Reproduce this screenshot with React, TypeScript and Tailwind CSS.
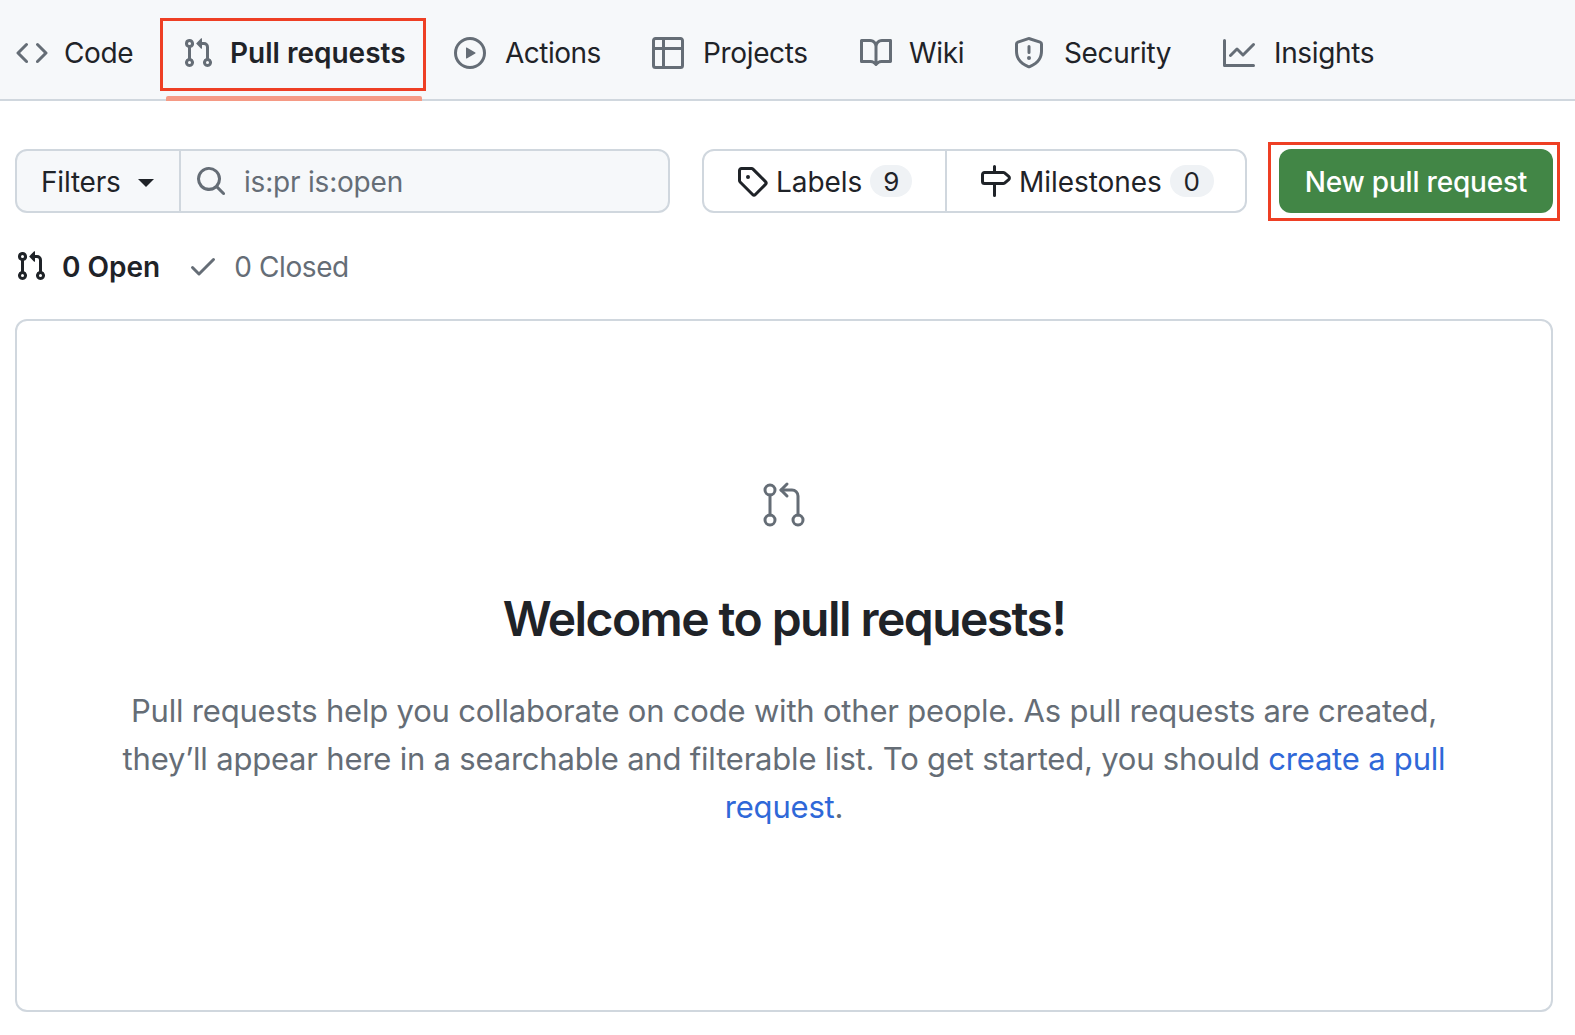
const P = {
  code: "M11.28 3.22a.75.75 0 0 0-1.06 1.06L13.94 8l-3.72 3.72a.749.749 0 0 0 .326 1.275.749.749 0 0 0 .734-.215l4.25-4.25a.75.75 0 0 0 0-1.06Zm-6.56 0a.751.751 0 0 1 1.042.018.751.751 0 0 1 .018 1.042L2.06 8l3.72 3.72a.749.749 0 0 1-.326 1.275.749.749 0 0 1-.734-.215L.47 8.53a.75.75 0 0 1 0-1.06Z",
  pr: "M1.5 3.25a2.25 2.25 0 1 1 3 2.122v5.256a2.251 2.251 0 1 1-1.5 0V5.372A2.25 2.25 0 0 1 1.5 3.25Zm5.677-.177L9.573.677A.25.25 0 0 1 10 .854V2.5h1A2.5 2.5 0 0 1 13.5 5v5.628a2.251 2.251 0 1 1-1.5 0V5a1 1 0 0 0-1-1h-1v1.646a.25.25 0 0 1-.427.177L7.177 3.427a.25.25 0 0 1 0-.354ZM3.75 2.5a.75.75 0 1 0 0 1.5.75.75 0 0 0 0-1.5Zm0 9.5a.75.75 0 1 0 0 1.5.75.75 0 0 0 0-1.5Zm8.25.75a.75.75 0 1 0 1.5 0 .75.75 0 0 0-1.5 0Z",
  play: "M8 0a8 8 0 1 1 0 16A8 8 0 0 1 8 0ZM1.5 8a6.5 6.5 0 1 0 13 0 6.5 6.5 0 0 0-13 0Zm4.879-2.773 4.264 2.559a.25.25 0 0 1 0 .428l-4.264 2.559A.25.25 0 0 1 6 10.559V5.442a.25.25 0 0 1 .379-.215Z",
  table: "M0 1.75C0 .784.784 0 1.75 0h12.5C15.216 0 16 .784 16 1.75v12.5A1.75 1.75 0 0 1 14.25 16H1.75A1.75 1.75 0 0 1 0 14.25ZM6.5 6.5v8h7.75a.25.25 0 0 0 .25-.25V6.5Zm8-1.5V1.75a.25.25 0 0 0-.25-.25H6.5V5Zm-13 1.5v7.75c0 .138.112.25.25.25H5v-8ZM5 5V1.5H1.75a.25.25 0 0 0-.25.25V5Z",
  book: "M0 1.75A.75.75 0 0 1 .75 1h4.253c1.227 0 2.317.59 3 1.501A3.743 3.743 0 0 1 11.006 1h4.245a.75.75 0 0 1 .75.75v10.5a.75.75 0 0 1-.75.75h-4.507a2.25 2.25 0 0 0-1.591.659l-.622.621a.75.75 0 0 1-1.06 0l-.622-.621A2.25 2.25 0 0 0 5.258 13H.75a.75.75 0 0 1-.75-.75Zm7.251 10.324.004-5.073-.002-2.253A2.25 2.25 0 0 0 5.003 2.5H1.5v9h3.757a3.75 3.75 0 0 1 1.994.574ZM8.755 4.75l-.004 7.322a3.752 3.752 0 0 1 1.992-.572H14.5v-9h-3.495a2.25 2.25 0 0 0-2.25 2.25Z",
  shield: "M7.467.133a1.748 1.748 0 0 1 1.066 0l5.25 1.68A1.75 1.75 0 0 1 15 3.48V7c0 1.566-.32 3.182-1.303 4.682-.983 1.498-2.585 2.813-5.032 3.855a1.697 1.697 0 0 1-1.33 0c-2.447-1.042-4.049-2.357-5.032-3.855C1.32 10.182 1 8.566 1 7V3.48a1.75 1.75 0 0 1 1.217-1.667Zm.61 1.429a.25.25 0 0 0-.153 0l-5.25 1.68a.25.25 0 0 0-.174.238V7c0 1.358.275 2.666 1.057 3.86.784 1.194 2.121 2.34 4.366 3.297a.196.196 0 0 0 .154 0c2.245-.956 3.582-2.104 4.366-3.298C13.225 9.666 13.5 8.36 13.5 7V3.48a.251.251 0 0 0-.174-.237l-5.25-1.68ZM8.75 4.75v3a.75.75 0 0 1-1.5 0v-3a.75.75 0 0 1 1.5 0ZM9 10.5a1 1 0 1 1-2 0 1 1 0 0 1 2 0Z",
  graph: "M1.5 1.75V13.5h13.75a.75.75 0 0 1 0 1.5H.75a.75.75 0 0 1-.75-.75V1.75a.75.75 0 0 1 1.5 0Zm14.28 2.53-5.25 5.25a.75.75 0 0 1-1.06 0L7 7.06 4.28 9.78a.751.751 0 0 1-1.042-.018.751.751 0 0 1-.018-1.042l3.25-3.25a.75.75 0 0 1 1.06 0L10 7.94l4.72-4.72a.751.751 0 0 1 1.042.018.751.751 0 0 1 .018 1.042Z",
  search: "M10.68 11.74a6 6 0 0 1-7.922-8.982 6 6 0 0 1 8.982 7.922l3.04 3.04a.749.749 0 0 1-.326 1.275.749.749 0 0 1-.734-.215ZM11.5 7a4.499 4.499 0 1 0-8.997 0A4.499 4.499 0 0 0 11.5 7Z",
  tag: "M1 7.775V2.75C1 1.784 1.784 1 2.75 1h5.025c.464 0 .91.184 1.238.513l6.25 6.25a1.75 1.75 0 0 1 0 2.474l-5.026 5.026a1.75 1.75 0 0 1-2.474 0l-6.25-6.25A1.752 1.752 0 0 1 1 7.775Zm1.5 0c0 .066.026.13.073.177l6.25 6.25a.25.25 0 0 0 .354 0l5.025-5.025a.25.25 0 0 0 0-.354l-6.25-6.25a.25.25 0 0 0-.177-.073H2.75a.25.25 0 0 0-.25.25ZM6 5a1 1 0 1 1 0 2 1 1 0 0 1 0-2Z",
  milestone: "M7.75 0a.75.75 0 0 1 .75.75V3h3.634c.414 0 .814.147 1.13.414l2.07 1.75a1.75 1.75 0 0 1 0 2.672l-2.07 1.75a1.75 1.75 0 0 1-1.13.414H8.5v5.25a.75.75 0 0 1-1.5 0V10H2.75A1.75 1.75 0 0 1 1 8.25v-3.5C1 3.784 1.784 3 2.75 3H7V.75A.75.75 0 0 1 7.75 0Zm4.384 8.5a.25.25 0 0 0 .161-.06l2.07-1.75a.248.248 0 0 0 0-.38l-2.07-1.75a.25.25 0 0 0-.161-.06H2.75a.25.25 0 0 0-.25.25v3.5c0 .138.112.25.25.25h9.384Z",
  check: "M13.78 4.22a.75.75 0 0 1 0 1.06l-7.25 7.25a.75.75 0 0 1-1.06 0L2.22 9.28a.751.751 0 0 1 .018-1.042.751.751 0 0 1 1.042-.018l2.72 2.72 6.72-6.72a.75.75 0 0 1 1.06 0Z",
};

function Icon({ d, size = 32, className = "" }: { d: string; size?: number; className?: string }) {
  return (
    <svg viewBox="0 0 16 16" width={size} height={size} fill="currentColor" className={`shrink-0 ${className}`}>
      <path d={d} />
    </svg>
  );
}

function Tab({ icon, label, className = "" }: { icon: string; label: string; className?: string }) {
  return (
    <div className={`flex items-center ${className}`}>
      <Icon d={icon} className="text-[#656d76]" />
      <span>{label}</span>
    </div>
  );
}

export default function App() {
  return (
    <div className="h-[1035px] overflow-hidden bg-white text-[#1f2328] font-['Inter','Liberation_Sans',sans-serif]">
      <nav className="flex h-[101px] items-center border-b-2 border-[#d0d7de] bg-[#f6f8fa] pl-[16px] pt-[7px] text-[28px] tracking-[-0.35px]">
        <div className="flex w-[144px] items-center gap-[16px]">
          <Icon d={P.code} className="text-[#656d76]" />
          <span>Code</span>
        </div>
        <div className="relative -mt-[7px] flex h-[calc(100%+7px)] w-[266px] items-center gap-[16px] pl-[22px] pt-[7px] font-semibold tracking-normal">
          <Icon d={P.pr} className="text-[#656d76]" />
          <span>Pull requests</span>
          <div className="absolute left-0 right-0 top-[18px] h-[73px] border-[3px] border-[#ee3f24]" />
          <div className="absolute left-[6px] right-[4px] bottom-[-2px] h-[5px] rounded-t-[2px] bg-[#f59a85]" />
        </div>
        <Tab icon={P.play} label="Actions" className="ml-[28px] w-[198px] gap-[19px] tracking-[-0.5px]" />
        <Tab icon={P.table} label="Projects" className="w-[208px] gap-[19px]" />
        <Tab icon={P.book} label="Wiki" className="w-[153px] gap-[17px]" />
        <Tab icon={P.shield} label="Security" className="w-[210px] gap-[19px]" />
        <Tab icon={P.graph} label="Insights" className="gap-[19px]" />
      </nav>

      <main className="pl-[15px]">
        <div className="mt-[48px] flex h-[64px] items-stretch text-[28px] tracking-[-0.2px]">
          <div className="flex w-[655px] rounded-[12px] border-2 border-[#d0d7de] bg-[#f6f8fa]">
            <div className="flex w-[164px] items-center gap-[17px] border-r-2 border-[#d0d7de] pl-[24px]">
              <span className="pt-[1px]">Filters</span>
              <svg width="16" height="8" viewBox="0 0 16 8" className="mt-[3px]">
                <path d="M0 0h16L8 8Z" fill="#1f2328" />
              </svg>
            </div>
            <div className="flex items-center gap-[17px] pl-[14px] text-[#656d76]">
              <Icon d={P.search} />
              <span className="pt-[1px]">is:pr is:open</span>
            </div>
          </div>
          <div className="ml-[32px] flex w-[545px] rounded-[12px] border-2 border-[#d0d7de] tracking-[-0.05px]">
            <div className="flex w-[243px] items-center gap-[8px] border-r-2 border-[#d0d7de] pl-[32px]">
              <Icon d={P.tag} />
              <span className="pt-[1px]">Labels</span>
              <span className="flex h-[32px] w-[42px] items-center justify-center rounded-full bg-[#eff2f5] text-[26px]">9</span>
            </div>
            <div className="flex items-center gap-[8px] pl-[32px]">
              <Icon d={P.milestone} />
              <span className="pt-[1px]">Milestones</span>
              <span className="flex h-[32px] w-[44px] items-center justify-center rounded-full bg-[#eff2f5] text-[26px]">0</span>
            </div>
          </div>
          <div className="relative ml-[32px] flex w-[274px] items-center justify-center rounded-[12px] bg-[#428646] pt-[1px] font-medium text-white">
            New pull request
            <div className="absolute -left-[11px] -right-[7px] -top-[7px] -bottom-[8px] border-[3px] border-[#ee3f24]" />
          </div>
        </div>

        <div className="mt-[31px] flex h-[44px] items-center text-[28px] tracking-[-0.2px]">
          <Icon d={P.pr} />
          <span className="ml-[15px] pt-[1px] font-semibold tracking-normal">0 Open</span>
          <Icon d={P.check} className="ml-[27px] text-[#656d76]" />
          <span className="ml-[15px] pt-[1px] tracking-[-0.4px] text-[#656d76]">0 Closed</span>
        </div>

        <section className="mt-[31px] flex h-[693px] w-[1538px] flex-col items-center rounded-[12px] border-2 border-[#d0d7de] pt-[159px]">
          <svg width="48" height="48" viewBox="0 0 48 48" fill="none" stroke="#656d76" strokeWidth="3" strokeLinecap="round" strokeLinejoin="round" className="shrink-0">
            <circle cx="10" cy="10" r="5" />
            <path d="M10 15v20" />
            <circle cx="10" cy="40" r="5" />
            <circle cx="38" cy="40" r="5" />
            <path d="M38 35V16a6 6 0 0 0-6-6H21" />
            <path d="M27 4l-6 6 6 6" />
          </svg>
          <h2 className="mt-[55px] text-[48px] leading-[72px] font-semibold tracking-[-1.56px]">Welcome to pull requests!</h2>
          <p className="mt-[32px] w-[1340px] text-center text-[31px] leading-[48px] tracking-[-0.2px] text-[#656d76]">
            Pull requests help you collaborate on code with other people. As pull requests are created, they’ll appear here in a searchable and filterable list. To get started, you should{" "}
            <span className="text-[#2f68d8]">create a pull request</span>.
          </p>
        </section>
      </main>
    </div>
  );
}
